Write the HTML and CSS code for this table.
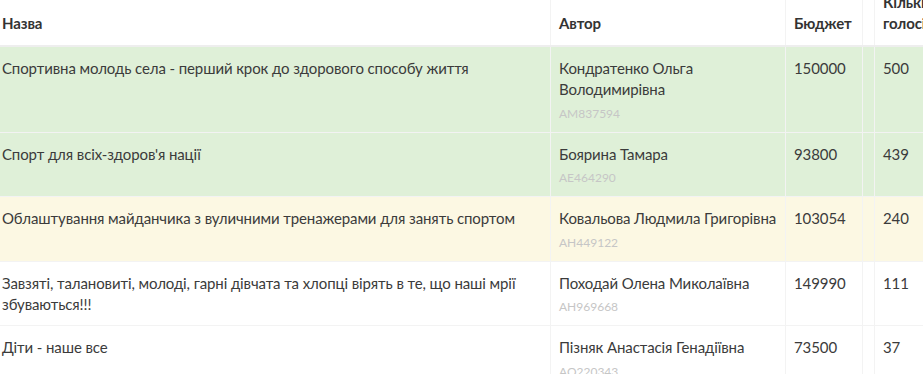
FILE: index.html
```html
<!DOCTYPE html>
<html lang="uk">
<head>
<meta charset="utf-8">
<title>Проекти</title>
<link rel="stylesheet" href="styles.css">
</head>
<body>
<div class="table-wrap">
  <table class="projects">
    <colgroup>
      <col class="c-name">
      <col class="c-author">
      <col class="c-budget">
      <col class="c-gap">
      <col class="c-votes">
    </colgroup>
    <thead>
      <tr>
        <th>Назва</th>
        <th>Автор</th>
        <th>Бюджет</th>
        <th class="gap"></th>
        <th>Кількість голосів</th>
      </tr>
    </thead>
    <tbody>
      <tr class="success">
        <td>Спортивна молодь села - перший крок до здорового способу життя</td>
        <td>Кондратенко Ольга Володимирівна<div class="pid">AM837594</div></td>
        <td>150000</td>
        <td class="gap"></td>
        <td>500</td>
      </tr>
      <tr class="success">
        <td>Спорт для всіх-здоров'я нації</td>
        <td>Боярина Тамара<div class="pid">AE464290</div></td>
        <td>93800</td>
        <td class="gap"></td>
        <td>439</td>
      </tr>
      <tr class="warning">
        <td>Облаштування майданчика з вуличними тренажерами для занять спортом</td>
        <td>Ковальова Людмила Григорівна<div class="pid">AH449122</div></td>
        <td>103054</td>
        <td class="gap"></td>
        <td>240</td>
      </tr>
      <tr>
        <td>Завзяті, талановиті, молоді, гарні дівчата та хлопці вірять в те, що наші мрії збуваються!!!</td>
        <td>Походай Олена Миколаївна<div class="pid">AH969668</div></td>
        <td>149990</td>
        <td class="gap"></td>
        <td>111</td>
      </tr>
      <tr>
        <td>Діти - наше все</td>
        <td>Пізняк Анастасія Генадіївна<div class="pid">AO220343</div></td>
        <td>73500</td>
        <td class="gap"></td>
        <td>37</td>
      </tr>
    </tbody>
  </table>
</div>
</body>
</html>
```

FILE: styles.css
```css
html, body {
  margin: 0;
  padding: 0;
  background: #fff;
  overflow: hidden;
}

body {
  font-family: Lato, "Noto Sans", sans-serif;
  font-size: 15px;
  line-height: 1.42857;
  letter-spacing: -0.1px;
  color: #3b3b3b;
}

.table-wrap {
  overflow: hidden;
  height: 374px;
}

.projects {
  border-collapse: collapse;
  table-layout: fixed;
  width: 981px;
  margin-top: -18px;
  margin-left: -7px;
}

.c-name { width: 557px; }
.c-author { width: 235px; }
.c-budget { width: 77px; }
.c-gap { width: 12px; }
.c-votes { width: 100px; }

.projects th,
.projects td {
  border: 1px solid #f3f3f3;
  padding: 11px 3px 10px 8px;
  text-align: left;
  vertical-align: top;
}

.projects th {
  padding: 10px 3px 10px 8px;
  vertical-align: bottom;
  font-weight: 700;
  color: #333;
  border-top: 0;
  border-bottom: 2px solid #eeeeee;
}

.projects th.gap,
.projects td.gap {
  padding: 0;
}

.projects tr.success td {
  background: #dff0d8;
}

.projects tr.warning td {
  background: #fcf8e3;
}

.pid {
  margin-top: 4px;
  font-size: 12px;
  line-height: 17px;
  letter-spacing: 0;
  color: #c6c6c6;
}
```
